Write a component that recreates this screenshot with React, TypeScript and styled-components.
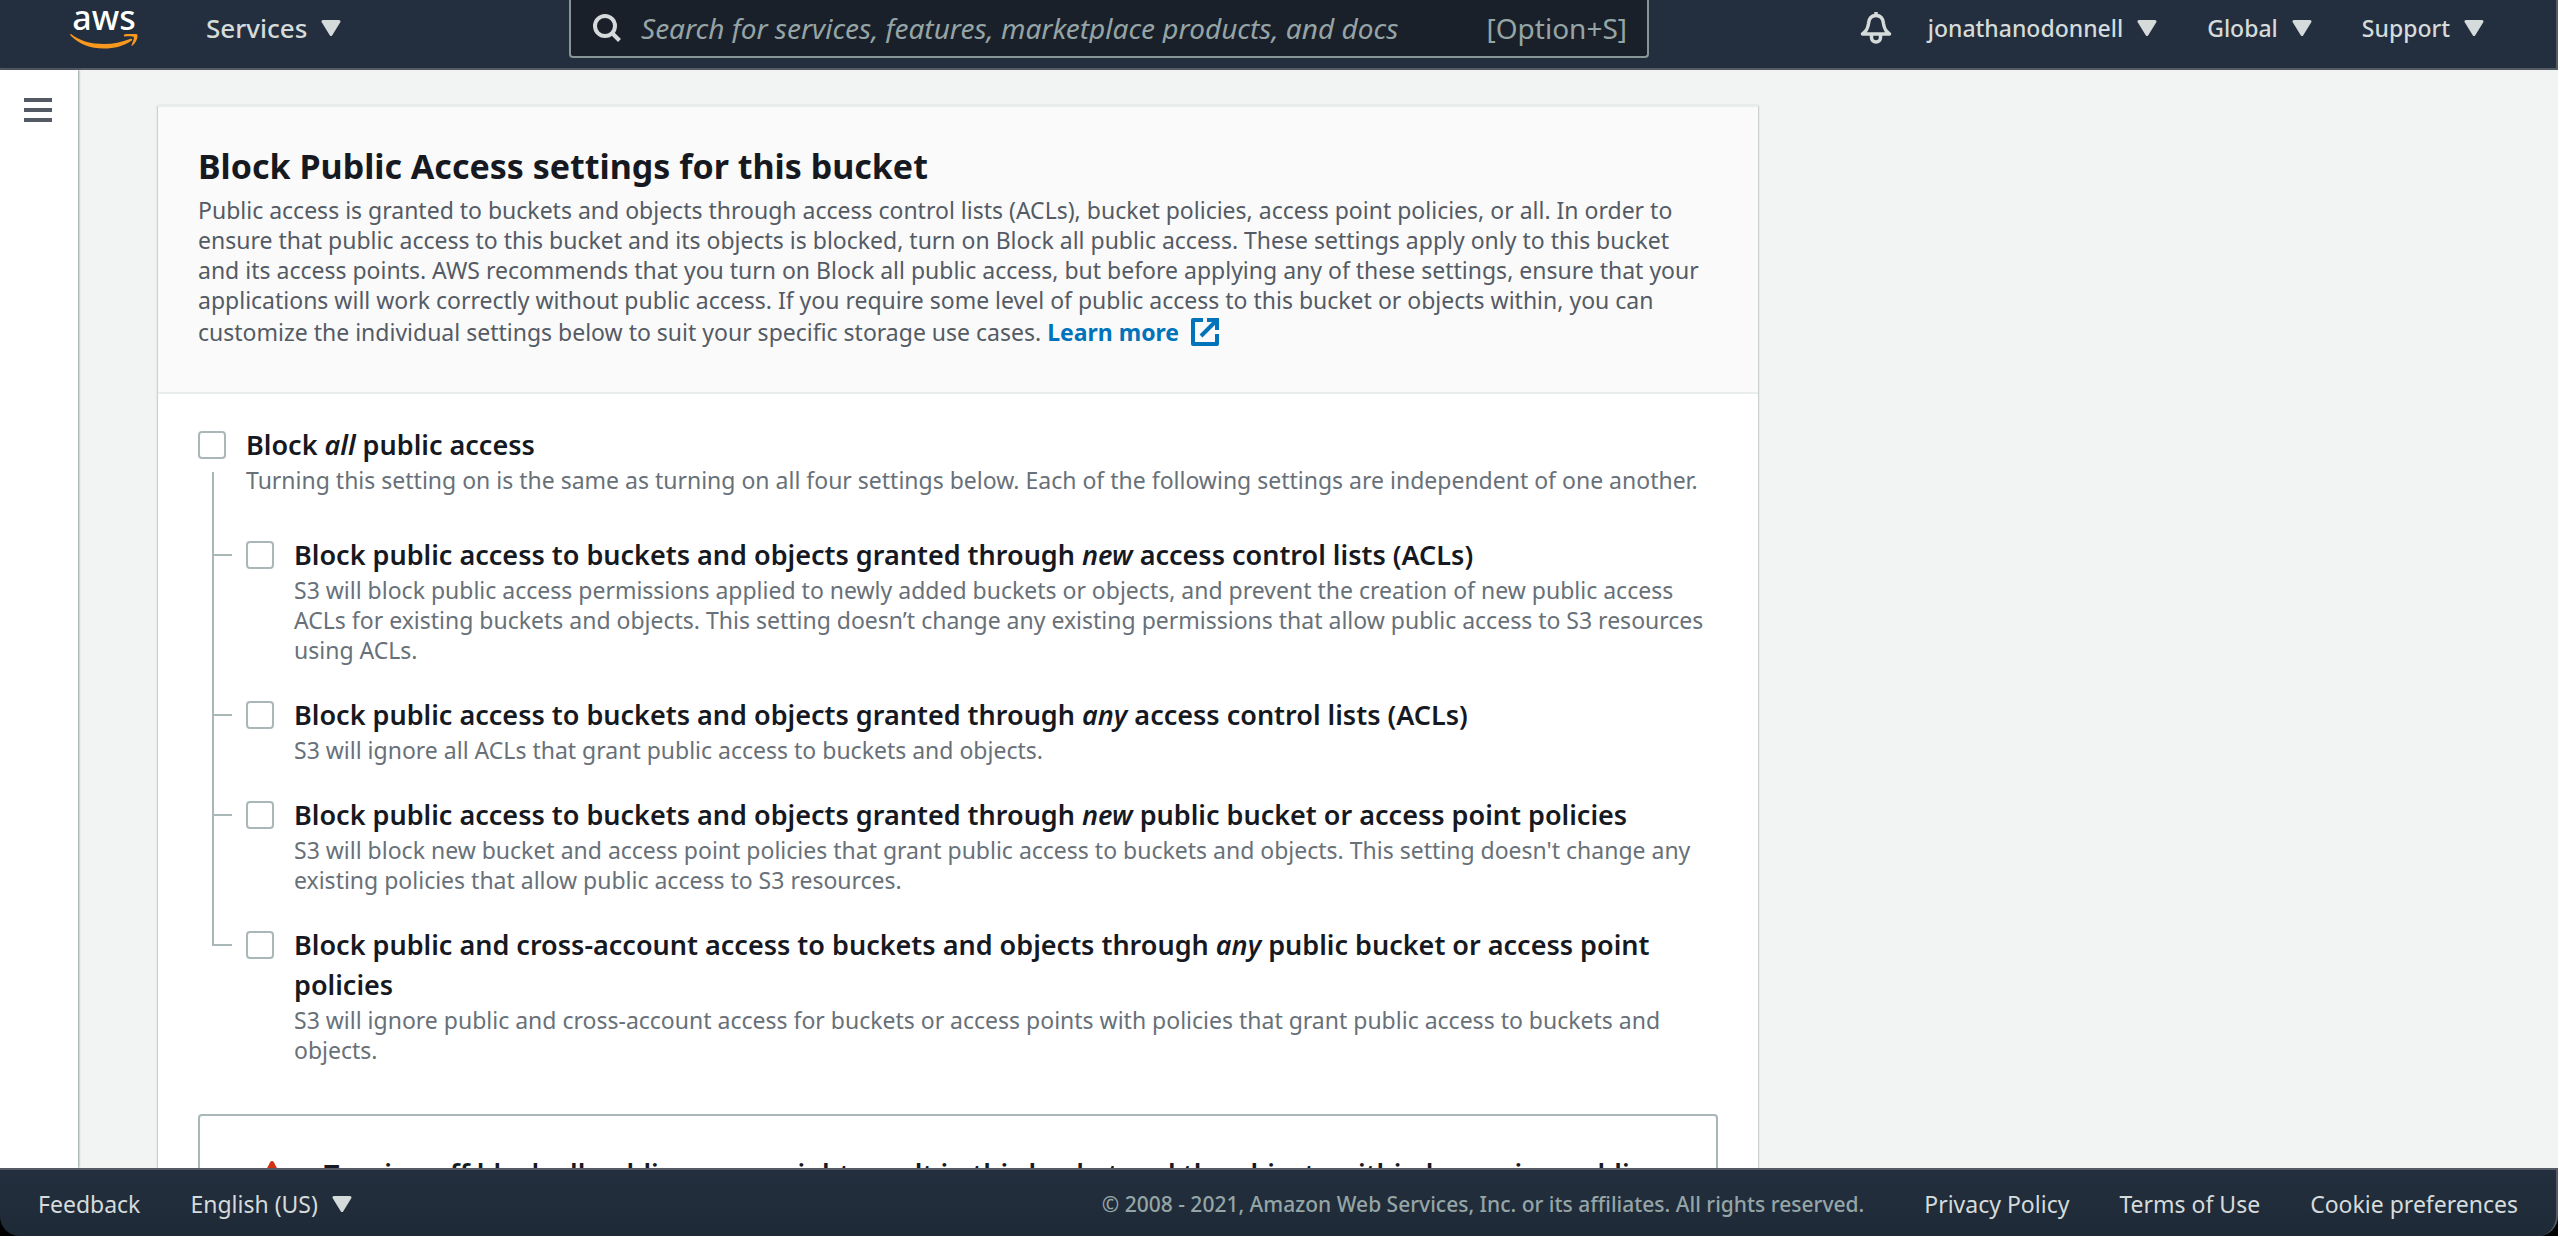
import React from "react";
import styled, { createGlobalStyle } from "styled-components";

const GlobalStyle = createGlobalStyle`
  *, *::before, *::after { box-sizing: border-box; }
  body {
    margin: 0;
    background: #000;
    font-family: "Noto Sans", "Open Sans", sans-serif;
    font-size: 23px;
    font-weight: 400;
    line-height: 30px;
    color: #16191f;
  }
  button, input { font: inherit; }
  a { color: inherit; text-decoration: none; }
`;

const Shell = styled.div`
  display: flex;
  flex-direction: column;
  height: 100vh;
  overflow: hidden;
`;

const TopBar = styled.header`
  display: flex;
  align-items: flex-start;
  flex: none;
  height: 70px;
  padding: 0 72px 0 70px;
  background: #232f3e;
  border-bottom: 2px solid #545b64;
  border-right: 2px solid #545b64;
  color: #d5dbdb;
  font-weight: 500;
`;

const Logo = styled.a`
  display: flex;
  flex-direction: column;
  align-items: center;
  width: 68px;
  margin-right: 68px;
  color: #fff;
  font-size: 34px;
  line-height: 34px;
`;

const LogoSmile = styled.svg`
  display: block;
  width: 68px;
  height: 16px;
`;

const MenuButton = styled.button`
  display: flex;
  align-items: center;
  gap: 14px;
  padding: 0;
  border: 0;
  background: none;
  color: inherit;
  font-size: ${(p: { $large?: boolean }) => (p.$large ? "26px" : "23px")};
  line-height: 30px;
  white-space: nowrap;
  cursor: pointer;
`;

const TopGroup = styled.nav<{ $end?: boolean }>`
  display: flex;
  align-items: center;
  gap: 50px;
  height: 56px;
  flex: ${(p) => (p.$end ? "none" : "0 0 363px")};
  margin-left: ${(p) => (p.$end ? "auto" : "0")};
`;

const BellButton = styled.button`
  display: flex;
  padding: 0;
  margin-right: -14px;
  border: 0;
  background: none;
  color: inherit;
`;

const SearchBox = styled.label`
  display: flex;
  align-items: center;
  flex: 0 1 1080px;
  height: 58px;
  padding: 0 20px 0 22px;
  gap: 20px;
  background: #1a202a;
  border: 2px solid #879596;
  border-top: 0;
  border-radius: 0 0 4px 4px;
  color: #95a5a6;
  font-size: 28px;
  font-weight: 400;
`;

const SearchInput = styled.input`
  flex: 1;
  min-width: 0;
  padding: 0;
  border: 0;
  outline: 0;
  background: transparent;
  color: #d5dbdb;
  &::placeholder {
    color: #95a5a6;
    opacity: 1;
    font-style: italic;
  }
`;

const Body = styled.div`
  display: flex;
  flex: 1;
  min-height: 0;
  background: #f2f3f3;
`;

const Rail = styled.aside`
  flex: none;
  width: 78px;
  padding: 28px 24px;
  background: #fff;
  box-shadow: 1px 0 2px rgba(0, 28, 36, 0.4);
`;

const RailButton = styled.button`
  display: flex;
  flex-direction: column;
  gap: 6px;
  width: 28px;
  padding: 0;
  border: 0;
  background: none;
`;

const Bar = styled.span`
  height: 4px;
  width: 100%;
  background: #545b64;
`;

const Main = styled.main`
  flex: 1;
  min-width: 0;
  padding: 35px 80px 0;
  overflow: hidden;
`;

const Card = styled.section`
  max-width: 1600px;
  background: #fff;
  border-top: 2px solid #eaeded;
  box-shadow: 0 1px 2px rgba(0, 28, 36, 0.5);
`;

const CardHeader = styled.div`
  padding: 35px 48px 43px 40px;
  background: #fafafa;
  border-bottom: 2px solid #eaeded;
  color: #545b64;
`;

const CardTitle = styled.h2`
  margin: 0 0 5px;
  color: #16191f;
  font-size: 34px;
  line-height: 48px;
  font-weight: 700;
`;

const Intro = styled.p`
  margin: 0;
`;

const DocLink = styled.a`
  display: inline-flex;
  align-items: center;
  gap: 12px;
  line-height: 34px;
  color: #0073bb;
  font-weight: 700;
`;

const CardBody = styled.div`
  padding: 31px 40px 40px;
`;

const Setting = styled.div`
  display: grid;
  grid-template-columns: 28px 1fr;
  column-gap: 20px;
  position: relative;
`;

const Check = styled.input`
  appearance: none;
  width: 28px;
  height: 28px;
  margin: 6px 0;
  background: #fff;
  border: 2px solid #aab7b8;
  border-radius: 4px;
`;

const SettingLabel = styled.label`
  font-size: 27px;
  line-height: 40px;
  font-weight: 600;
`;

const Hint = styled.p`
  grid-column: 2;
  margin: 0;
  color: #687078;
`;

const Tree = styled.ul`
  display: flex;
  flex-direction: column;
  gap: 30px;
  margin: -23px 0 0 14px;
  padding: 63px 0 0;
  list-style: none;
  background: linear-gradient(#aab7b8, #aab7b8) no-repeat 0 0 / 2px 63px;
`;

/* Each branch carries its own stretch of the trunk and a tick toward its box. */
const Branch = styled.li`
  position: relative;
  padding-left: 34px;
  &::before {
    content: "";
    position: absolute;
    left: 0;
    top: 0;
    width: 20px;
    height: 21px;
    border-left: 2px solid #aab7b8;
    border-bottom: 2px solid #aab7b8;
  }
  &:not(:last-child)::after {
    content: "";
    position: absolute;
    left: 0;
    top: 20px;
    bottom: -30px;
    width: 2px;
    background: #aab7b8;
  }
`;

const Alert = styled.div`
  display: flex;
  align-items: center;
  gap: 36px;
  margin-top: 49px;
  padding: 38px 38px 38px 56px;
  border: 2px solid #aab7b8;
  border-radius: 4px;
`;

const AlertText = styled.p`
  margin: 0;
  font-size: 27px;
  line-height: 40px;
  font-weight: 600;
`;

const Footer = styled.footer`
  display: flex;
  align-items: center;
  flex: none;
  height: 68px;
  padding: 2px 38px 0 38px;
  gap: 50px;
  background: linear-gradient(#232f3e, #1f2a37);
  border-top: 2px solid #545b64;
  border-right: 2px solid #545b64;
  border-radius: 0 0 20px 20px;
  color: #d5dbdb;
  white-space: nowrap;
`;

const Legal = styled.div`
  display: flex;
  align-items: center;
  gap: 50px;
  margin-left: auto;
`;

const Copyright = styled.span`
  margin-right: 10px;
  color: #95a5a6;
  font-size: 21px;
  font-weight: 500;
`;

const Caret = () => (
  <svg width="20" height="16" viewBox="0 0 20 16" aria-hidden="true">
    <path d="M2 1.500h16L10 14.500z" fill="currentColor" stroke="currentColor" strokeWidth="3" strokeLinejoin="round" />
  </svg>
);

const SearchIcon = () => (
  <svg width="28" height="28" viewBox="0 0 28 28" fill="none" stroke="#d5dbdb" strokeWidth="4" aria-hidden="true">
    <circle cx="12" cy="12" r="10" />
    <path d="M18.500 18.500 26.500 26.500" />
  </svg>
);

const BellIcon = () => (
  <svg width="32" height="34" viewBox="0 0 32 34" fill="none" stroke="currentColor" strokeWidth="3.500" strokeLinejoin="round" aria-hidden="true">
    <path d="M16 1v3M2.500 23c5-3.500 5.500-7 6-10.500C9 7 12 4.500 16 4.500S23 7 23.500 12.500c.5 3.500 1 7 6 10.500z" />
    <path d="M11.500 24v2.500a4.500 4.500 0 0 0 9 0V24" />
  </svg>
);

const ExternalIcon = () => (
  <svg width="28" height="28" viewBox="0 0 28 28" fill="none" stroke="currentColor" strokeWidth="4" aria-hidden="true">
    <path d="M12 2H2v24h24V16" strokeLinejoin="round" />
    <path d="M16 2h10v10M26 2 10 18" />
  </svg>
);

const WarningIcon = () => (
  <svg width="32" height="32" viewBox="0 0 32 32" fill="none" stroke="#d13212" strokeWidth="4" strokeLinejoin="round" aria-hidden="true">
    <path d="M16 13v8M16 23v3" />
    <path d="M16 5 3 30h26z" />
  </svg>
);

const settings = [
  {
    id: "new-acl",
    label: <>Block public access to buckets and objects granted through <em>new</em> access control lists (ACLs)</>,
    hint: "S3 will block public access permissions applied to newly added buckets or objects, and prevent the creation of new public access ACLs for existing buckets and objects. This setting doesn’t change any existing permissions that allow public access to S3 resources using ACLs.",
  },
  {
    id: "any-acl",
    label: <>Block public access to buckets and objects granted through <em>any</em> access control lists (ACLs)</>,
    hint: "S3 will ignore all ACLs that grant public access to buckets and objects.",
  },
  {
    id: "new-policy",
    label: <>Block public access to buckets and objects granted through <em>new</em> public bucket or access point policies</>,
    hint: "S3 will block new bucket and access point policies that grant public access to buckets and objects. This setting doesn't change any existing policies that allow public access to S3 resources.",
  },
  {
    id: "any-policy",
    label: <>Block public and cross-account access to buckets and objects through <em>any</em> public bucket or access point policies</>,
    hint: "S3 will ignore public and cross-account access for buckets or access points with policies that grant public access to buckets and objects.",
  },
];

export default function App() {
  return (
    <Shell>
      <GlobalStyle />
      <TopBar>
        <Logo href="#">
          aws
          <LogoSmile viewBox="0 0 68 16" aria-hidden="true">
            <path d="M1 0c9 7 20 10 33 10 9 0 18-2 26-5 2-1 3 1 1 2-7 5-17 7.500-27 7.500C20 14.500 9 10 1 2c-1-1-1-2.500 0-2z" fill="#f7981f" />
            <path d="M54 .800C58-1 65-1 67 .3c1.500 2-.5 8-4.500 11.200-.8.6-1.300.2-1-.6 1-2.500 3-6.500 2.200-7.800-1-1.300-5.700-1-8.700-.7-1 0-1.500-.8-1-1.600z" fill="#f7981f" />
          </LogoSmile>
        </Logo>
        <TopGroup>
          <MenuButton $large>Services <Caret /></MenuButton>
        </TopGroup>
        <SearchBox>
          <SearchIcon />
          <SearchInput type="search" aria-label="Search" placeholder="Search for services, features, marketplace products, and docs" />
          <span>[Option+S]</span>
        </SearchBox>
        <TopGroup $end>
          <BellButton aria-label="Notifications"><BellIcon /></BellButton>
          <MenuButton>jonathanodonnell <Caret /></MenuButton>
          <MenuButton>Global <Caret /></MenuButton>
          <MenuButton>Support <Caret /></MenuButton>
        </TopGroup>
      </TopBar>

      <Body>
        <Rail>
          <RailButton aria-label="Open navigation"><Bar /><Bar /><Bar /></RailButton>
        </Rail>
        <Main>
          <Card>
            <CardHeader>
              <CardTitle>Block Public Access settings for this bucket</CardTitle>
              <Intro>
                Public access is granted to buckets and objects through access control lists (ACLs), bucket policies, access point policies, or all. In order to ensure that public access to this bucket and its objects is blocked, turn on Block all public access. These settings apply only to this bucket and its access points. AWS recommends that you turn on Block all public access, but before applying any of these settings, ensure that your applications will work correctly without public access. If you require some level of public access to this bucket or objects within, you can customize the individual settings below to suit your specific storage use cases.{" "}
                <DocLink href="#">Learn more <ExternalIcon /></DocLink>
              </Intro>
            </CardHeader>
            <CardBody>
              <Setting>
                <Check type="checkbox" id="all" />
                <SettingLabel htmlFor="all">Block <em>all</em> public access</SettingLabel>
                <Hint>Turning this setting on is the same as turning on all four settings below. Each of the following settings are independent of one another.</Hint>
              </Setting>
              <Tree>
                {settings.map((s) => (
                  <Branch key={s.id}>
                    <Setting>
                      <Check type="checkbox" id={s.id} />
                      <SettingLabel htmlFor={s.id}>{s.label}</SettingLabel>
                      <Hint>{s.hint}</Hint>
                    </Setting>
                  </Branch>
                ))}
              </Tree>
              <Alert>
                <WarningIcon />
                <AlertText>Turning off block all public access might result in this bucket and the objects within becoming public</AlertText>
              </Alert>
            </CardBody>
          </Card>
        </Main>
      </Body>

      <Footer>
        <a href="#">Feedback</a>
        <MenuButton>English (US) <Caret /></MenuButton>
        <Legal>
          <Copyright>© 2008 - 2021, Amazon Web Services, Inc. or its affiliates. All rights reserved.</Copyright>
          <a href="#">Privacy Policy</a>
          <a href="#">Terms of Use</a>
          <a href="#">Cookie preferences</a>
        </Legal>
      </Footer>
    </Shell>
  );
}
